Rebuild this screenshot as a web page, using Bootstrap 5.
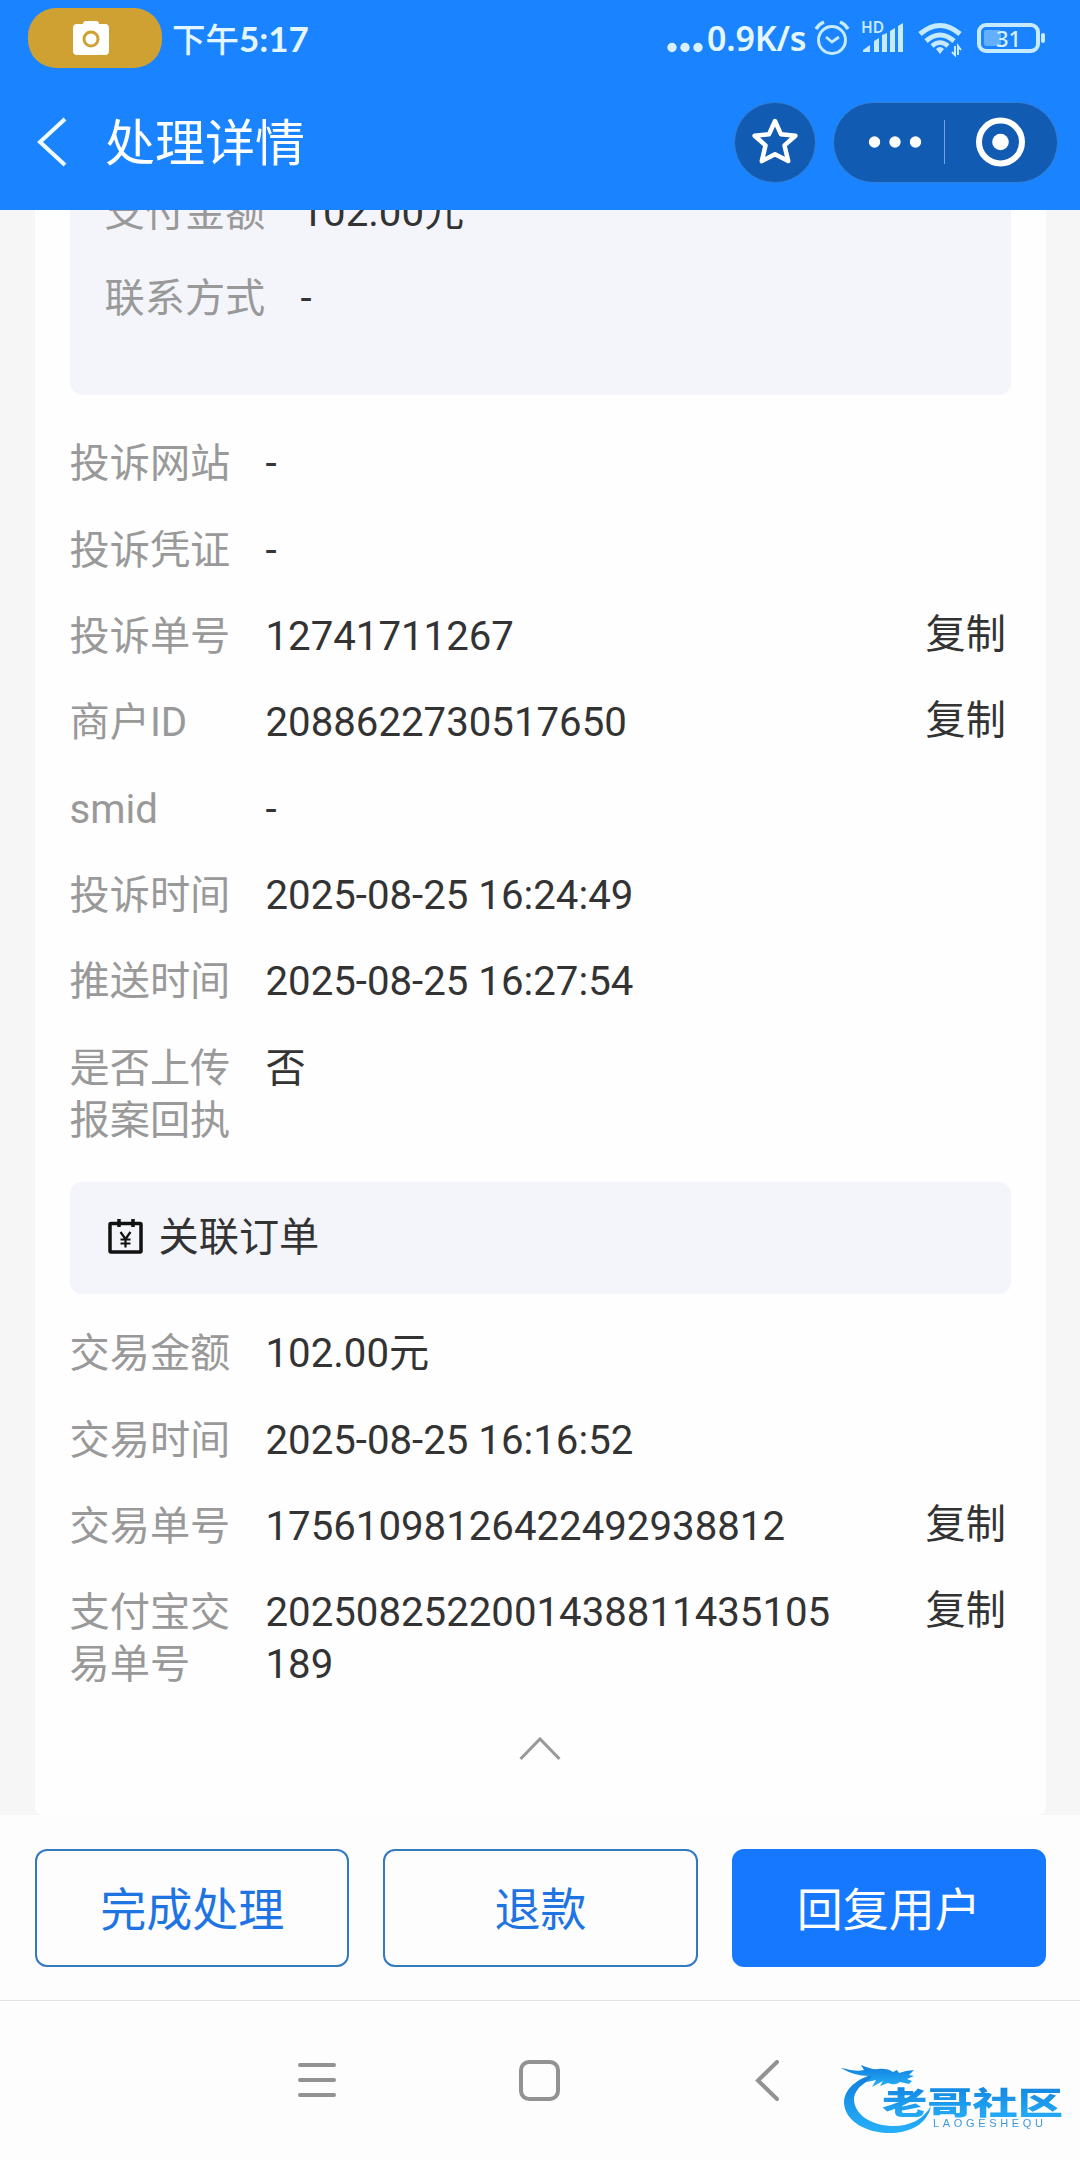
<!DOCTYPE html>
<html lang="zh-CN">
<head>
<meta charset="utf-8">
<meta name="viewport" content="width=device-width, initial-scale=1">
<title>处理详情</title>
<link href="https://cdn.jsdelivr.net/npm/bootstrap@5.3.0/dist/css/bootstrap.min.css" rel="stylesheet">
<style>
  body { width: 1080px; height: 2160px; background: #fdfdfd; color: #333; font: 40.2px/52px Roboto, "Noto Sans CJK SC", sans-serif; }
  svg { display: block; flex: none; }
  .top-area { height: 210px; background: #1a83ff; color: #fff; }
  .status-line { height: 76px; padding-left: 28px; color: #e4f6ff; }
  .cam-pill { width: 134px; height: 60px; border-radius: 28px; background: #cfa032; padding-right: 8px; }
  .clock { font: 500 33.5px/40px Lato, "Noto Sans CJK SC", sans-serif; margin-left: 10px; }
  .clock b { font-weight: 700; font-size: 35px; }
  .net-speed { font: 600 34px/40px "Noto Sans", sans-serif; width: 103px; margin-left: 3px; letter-spacing: -.2px; }
  .title-line { height: 134px; padding: 0 22px 2px 34px; }
  .page-title { font: 400 50px/60px "Noto Sans CJK SC", sans-serif; margin: 0 0 6px 37px; }
  .dark-pill { background: #115bb2; border: 1px solid #347fd6; border-radius: 41px; height: 81px; }
  .capsule { margin-left: 17px; }
  .scroll-area { height: 1605px; background: #f6f6f6; padding: 0 34px 0 35px; }
  .sheet { height: 1605px; background: #fefefe; padding: 0 35px 0 34.5px; border-radius: 0 0 8px 8px; }
  .soft-box { background: #f4f5fa; padding: 0 35px; }
  .box-a { height: 184.500px; border-radius: 0 0 12px 12px; margin-bottom: 26.500px; }
  .box-a .info:first-child { margin-top: -40.500px; }
  .box-b { height: 112px; border-radius: 12px; margin: 18px 0 17px; padding-left: 38px; }
  .info { padding: 17.2px 0; }
  .info dt { width: 161px; margin-right: 35px; font-weight: 400; color: #999; }
  .info dd { width: 580px; margin: 0; word-break: break-all; }
  .info .copy { margin: -2px 5px 0 auto; }
  .actions { height: 185px; padding: 34px 34px 0 35px; gap: 34px; }
  .act { --bs-btn-border-width: 2px; height: 118px; flex: 1 1 0; border-radius: 12px; font: 400 46px/60px "Noto Sans CJK SC", sans-serif; --bs-btn-color: #1f74e4; --bs-btn-border-color: #3379bd; }
  .act-main { --bs-btn-bg: #1677ff; --bs-btn-color: #fff; --bs-btn-border-color: #1677ff; }
  .sys-nav { height: 160px; border-top: 1px solid #e1e4e4; padding: 59px 0 0 297px; }
</style>
</head>
<body class="overflow-hidden position-relative">
<header class="top-area">
  <div class="status-line d-flex align-items-center">
    <div class="cam-pill d-flex align-items-center justify-content-center">
      <svg width="36" height="34" viewBox="0 0 36 34"><path fill="#fff" d="M4 3h6q0-3 3-3h10q3 0 3 3h6q4 0 4 4v23q0 4-4 4H4q-4 0-4-4V7q0-4 4-4z"/><circle cx="18" cy="18" r="7" fill="none" stroke="#cfa032" stroke-width="3"/></svg>
    </div>
    <div class="clock">下午<b>5:17</b></div>
    <svg class="ms-auto" width="37" height="40" viewBox="0 0 37 40" fill="#d8f0ff"><circle cx="5" cy="29.500" r="4.700"/><circle cx="18" cy="29.500" r="4.700"/><circle cx="31" cy="29.500" r="4.700"/></svg>
    <div class="net-speed text-nowrap">0.9K/s</div>
    <svg width="270" height="52" viewBox="810 12 270 52" fill="none" stroke="#c6eaff">
      <circle cx="832" cy="40" r="13.500" stroke-width="3"/><path d="M826 37l6 5 7-5" stroke-width="2.800"/><path d="M816 29q3-5 8-7M848 29q-3-5-8-7" stroke-width="3.500"/>
      <text x="861" y="33" font-family="Noto Sans" font-size="15.500" font-weight="600" fill="#c6eaff" stroke="none">HD</text>
      <path fill="#c6eaff" stroke="none" d="M863 52v-2l7-5v7zM874 52V41l5-3v14zM882 52V35l5-2v19zM890 52V31l5-3v24zM898 52V26l5-3v29z"/>
      <path stroke-width="5" d="M920 34q20-17 40 0M926 41q14-12 28 0"/><path stroke-width="4.500" d="M932 46q8-7 16 0"/><path fill="#c6eaff" stroke="none" d="M936 49q4-4 8 0l-4 5z"/><path stroke-width="2" d="M955 46v9l-3-3M958 55v-9l3 4"/>
      <rect x="979" y="25" width="59" height="26" rx="7" stroke-width="4"/><rect x="984" y="30" width="17" height="16" rx="2" fill="#62b0ff" stroke="none"/><rect x="1041" y="33" width="4" height="10" rx="2" fill="#c6eaff" stroke="none"/>
      <text x="1008.500" y="46.500" text-anchor="middle" font-family="Noto Sans" font-size="22" font-weight="500" fill="#d8f0ff" stroke="none">31</text>
    </svg>
  </div>
  <div class="title-line d-flex align-items-center">
    <svg width="34" height="52" viewBox="0 0 34 52" fill="none" stroke="#f0fcff" stroke-width="4"><path d="M31 3L6 26l25 23"/></svg>
    <h1 class="page-title">处理详情</h1>
    <div class="dark-pill d-flex align-items-center justify-content-center ms-auto" style="width:82px">
      <svg width="50" height="50" viewBox="0 0 50 50" fill="none" stroke="#fff" stroke-width="4.500" stroke-linejoin="round"><path d="M25 4l5.900 13.200 14.500 1.500-10.900 9.700 3.700 15.700L25 37.300 11.800 44.100l3.700-15.700L4.600 18.700l14.500-1.500z"/></svg>
    </div>
    <div class="dark-pill capsule" style="width:225px">
      <svg width="223" height="79" viewBox="834 103 223 79" fill="#fff"><circle cx="874.500" cy="142" r="5.700"/><circle cx="895" cy="142" r="5.700"/><circle cx="915.500" cy="142" r="5.700"/><path d="M944.500 120v44" stroke="#6fa5e2" stroke-width="1"/><circle cx="1000.500" cy="142" r="21.500" fill="none" stroke="#fff" stroke-width="6"/><circle cx="1000.500" cy="142" r="8.300"/></svg>
    </div>
  </div>
</header>

<main class="scroll-area overflow-hidden">
  <section class="sheet">
    <div class="soft-box box-a overflow-hidden">
      <dl class="info d-flex mb-0"><dt>支付金额</dt><dd>102.00元</dd></dl>
      <dl class="info d-flex mb-0"><dt>联系方式</dt><dd>-</dd></dl>
    </div>
    <dl class="info d-flex mb-0"><dt>投诉网站</dt><dd>-</dd></dl>
    <dl class="info d-flex mb-0"><dt>投诉凭证</dt><dd>-</dd></dl>
    <dl class="info d-flex mb-0"><dt>投诉单号</dt><dd>12741711267</dd><dd class="copy w-auto">复制</dd></dl>
    <dl class="info d-flex mb-0"><dt>商户ID</dt><dd>2088622730517650</dd><dd class="copy w-auto">复制</dd></dl>
    <dl class="info d-flex mb-0"><dt>smid</dt><dd>-</dd></dl>
    <dl class="info d-flex mb-0"><dt>投诉时间</dt><dd>2025-08-25 16:24:49</dd></dl>
    <dl class="info d-flex mb-0"><dt>推送时间</dt><dd>2025-08-25 16:27:54</dd></dl>
    <dl class="info d-flex mb-0"><dt>是否上传报案回执</dt><dd>否</dd></dl>
    <div class="soft-box box-b d-flex align-items-center">
      <svg class="mb-1" width="35" height="35" viewBox="0 0 35 35" fill="none" stroke="#111" stroke-width="3.500"><rect x="2" y="4.500" width="31" height="28.500" rx="1"/><path d="M11 0v8M25 0v8"/><path stroke-width="2.200" d="M12.500 13l5 7 5-7M17.500 20v8.500M12.500 20.500h10M12.500 24.500h10"/></svg>
      <span class="ms-3">关联订单</span>
    </div>
    <dl class="info d-flex mb-0"><dt>交易金额</dt><dd>102.00元</dd></dl>
    <dl class="info d-flex mb-0"><dt>交易时间</dt><dd>2025-08-25 16:16:52</dd></dl>
    <dl class="info d-flex mb-0"><dt>交易单号</dt><dd>17561098126422492938812</dd><dd class="copy w-auto">复制</dd></dl>
    <dl class="info d-flex mb-0"><dt>支付宝交易单号</dt><dd>2025082522001438811435105189</dd><dd class="copy w-auto">复制</dd></dl>
    <svg class="mx-auto" style="margin-top:26px" width="42" height="27" viewBox="0 0 42 27" fill="none" stroke="#999" stroke-width="3"><path d="M1.500 24L21 4l19.500 20"/></svg>
  </section>
</main>

<footer>
  <div class="actions d-flex">
    <button class="btn act p-0 pb-1">完成处理</button>
    <button class="btn act p-0 pb-1">退款</button>
    <button class="btn act act-main p-0 pb-1">回复用户</button>
  </div>
  <nav class="sys-nav">
    <svg width="783" height="90" viewBox="297 2060 783 90" fill="none" stroke="#929292" stroke-width="4" stroke-linecap="round">
      <defs>
        <linearGradient id="wave" x1="0" y1="0" x2="0" y2="1"><stop offset="0" stop-color="#0f7ddb"/><stop offset="1" stop-color="#28b0fa"/></linearGradient>
        <filter id="soften"><feGaussianBlur stdDeviation=".6"/></filter>
      </defs>
      <path d="M300 2065h34M300 2080h34M300 2095h34"/>
      <rect x="521" y="2062" width="37" height="37" rx="8"/>
      <path d="M777 2062l-19 18.500 19 18.500"/>
      <g stroke="none" fill="url(#wave)" filter="url(#soften)">
        <path d="M880 2073C861 2076 844 2087 844 2103C845 2122 868 2134 893 2133C913 2132 928 2122 931 2106C924 2119 910 2126 894 2126C873 2126 855 2116 854 2100C854 2089 866 2078 886 2076Z"/>
        <path d="M842 2068q13 4 22 2l-3-5q11 5 17 4 9-1 15 3l4-2 2 3 7-2 8-1-5 5 5 1-7 3 5 2-3 3-9-2q-5 4-12 1l-8 3 3-5-11 6 4-7-9 2 5-6q-16 1-31-8z"/>
        <text x="882" y="2113.500" textLength="181" lengthAdjust="spacingAndGlyphs" font-family="Noto Sans CJK SC" font-size="31" font-weight="900">老哥社区</text>
        <text x="933" y="2127" textLength="110" font-family="Liberation Sans" font-size="11" fill="#3e98da">LAOGESHEQU</text>
      </g>
    </svg>
  </nav>
</footer>
<script src="https://cdn.jsdelivr.net/npm/bootstrap@5.3.0/dist/js/bootstrap.bundle.min.js"></script>
</body>
</html>
